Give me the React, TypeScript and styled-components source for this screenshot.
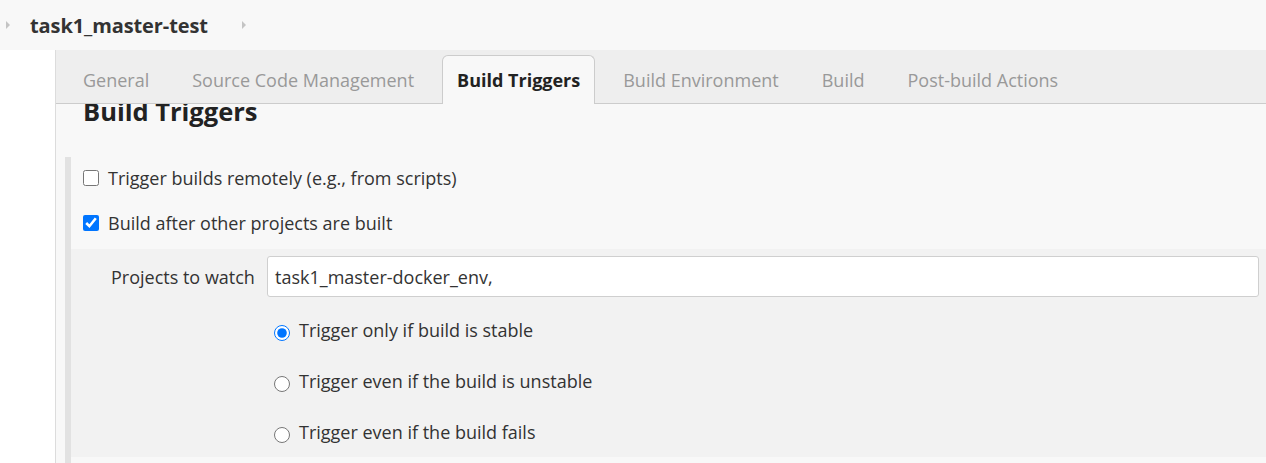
import React from "react";
import styled, { createGlobalStyle } from "styled-components";

const Global = createGlobalStyle`
  html, body { margin: 0; padding: 0; background: #ffffff; }
  body { font-family: "Open Sans", "Noto Sans", sans-serif; color: #333; overflow: hidden; }
  * { box-sizing: border-box; }
`;

const Page = styled.div`
  width: 1266px;
  height: 463px;
  overflow: hidden;
  display: flex;
  flex-direction: column;
`;

const TopBar = styled.div`
  height: 50px;
  flex: none;
  background: #f8f8f8;
  display: flex;
  align-items: center;
  padding-left: 5px;
`;

const Crumb = styled.span`
  font-size: 20px;
  font-weight: 700;
  color: #333;
  margin: 0 33px 0 19px;
  letter-spacing: -0.1px;
`;

const Caret = () => (
  <svg width="6" height="10" viewBox="0 0 6 10">
    <path d="M1 1 L5 5 L1 9 Z" fill="#c4c4c4" />
  </svg>
);

const Main = styled.div`
  flex: 1;
  display: flex;
  min-height: 0;
`;

const Gutter = styled.div`
  width: 55px;
  flex: none;
  background: #fff;
`;

const Content = styled.div`
  flex: 1;
  border-left: 1px solid #dcdcdc;
  background: #f8f8f8;
  display: flex;
  flex-direction: column;
  min-width: 0;
`;

const TabBar = styled.div`
  position: relative;
  z-index: 1;
  height: 54px;
  flex: none;
  background: #eeeeee;
  border-bottom: 1px solid #cccccc;
  display: flex;
  align-items: flex-end;
  padding-left: 12px;
  gap: 13px;
`;

const Tab = styled.div<{ $active?: boolean }>`
  height: ${(p) => (p.$active ? "49px" : "48px")};
  margin-bottom: ${(p) => (p.$active ? "-1px" : "0")};
  padding: 0 14px;
  display: flex;
  align-items: center;
  font-size: 18px;
  font-weight: ${(p) => (p.$active ? 700 : 400)};
  color: ${(p) => (p.$active ? "#222" : "#999999")};
  background: ${(p) => (p.$active ? "#f8f8f8" : "transparent")};
  border: 1px solid ${(p) => (p.$active ? "#cccccc" : "transparent")};
  border-bottom: none;
  border-radius: 6px 6px 0 0;
  white-space: nowrap;
`;

const Body = styled.div`
  flex: 1;
  padding-left: 9px;
  display: flex;
  flex-direction: column;
`;

const Heading = styled.h2`
  margin: -9px 0 0 18px;
  font-size: 25.5px;
  font-weight: 700;
  color: #222;
  line-height: 32px;
`;

const Section = styled.div`
  margin-top: 30px;
  border-left: 6px solid #e2e2e2;
  flex: 1;
  display: flex;
  flex-direction: column;
  gap: 3px;
`;

const CheckRow = styled.label`
  display: flex;
  align-items: center;
  height: 42px;
  padding-left: 12px;
  font-size: 18px;
  color: #333;
  gap: 9px;
`;

const Box = styled.input`
  width: 16px;
  height: 16px;
  margin: 0;
  accent-color: #0075ff;
`;

const Nested = styled.div`
  margin-top: 2px;
  background: #f2f2f2;
  height: 208px;
  padding: 7px 7px 0 40px;
  display: flex;
  flex-direction: column;
`;

const FieldRow = styled.div`
  display: flex;
  align-items: center;
  gap: 14px;
`;

const FieldLabel = styled.span`
  font-size: 18px;
  color: #333;
  width: 142px;
  flex: none;
  white-space: nowrap;
`;

const TextInput = styled.div`
  flex: 1;
  height: 41px;
  background: #fff;
  border: 1px solid #cfcfcf;
  border-radius: 3px;
  display: flex;
  align-items: center;
  padding-left: 7px;
  font-size: 18px;
  color: #333;
`;

const RadioGroup = styled.div`
  display: flex;
  flex-direction: column;
  padding-left: 163px;
  margin-top: 7px;
`;

const RadioRow = styled.label`
  display: flex;
  align-items: center;
  height: 51px;
  font-size: 18px;
  color: #333;
  gap: 9px;
`;

const Radio = styled.input`
  width: 16px;
  height: 16px;
  margin: 6px 0 0 0;
  accent-color: #0075ff;
`;

export default function App() {
  return (
    <Page>
      <Global />
      <TopBar>
        <Caret />
        <Crumb>task1_master-test</Crumb>
        <Caret />
      </TopBar>
      <Main>
        <Gutter />
        <Content>
          <TabBar>
            <Tab>General</Tab>
            <Tab>Source Code Management</Tab>
            <Tab $active>Build Triggers</Tab>
            <Tab>Build Environment</Tab>
            <Tab>Build</Tab>
            <Tab>Post-build Actions</Tab>
          </TabBar>
          <Body>
            <Heading>Build Triggers</Heading>
            <Section>
              <CheckRow>
                <Box type="checkbox" readOnly />
                Trigger builds remotely (e.g., from scripts)
              </CheckRow>
              <CheckRow>
                <Box type="checkbox" defaultChecked />
                Build after other projects are built
              </CheckRow>
              <Nested>
                <FieldRow>
                  <FieldLabel>Projects to watch</FieldLabel>
                  <TextInput>task1_master-docker_env,</TextInput>
                </FieldRow>
                <RadioGroup>
                  <RadioRow>
                    <Radio type="radio" name="t" defaultChecked />
                    Trigger only if build is stable
                  </RadioRow>
                  <RadioRow>
                    <Radio type="radio" name="t" />
                    Trigger even if the build is unstable
                  </RadioRow>
                  <RadioRow>
                    <Radio type="radio" name="t" />
                    Trigger even if the build fails
                  </RadioRow>
                </RadioGroup>
              </Nested>
            </Section>
          </Body>
        </Content>
      </Main>
    </Page>
  );
}
